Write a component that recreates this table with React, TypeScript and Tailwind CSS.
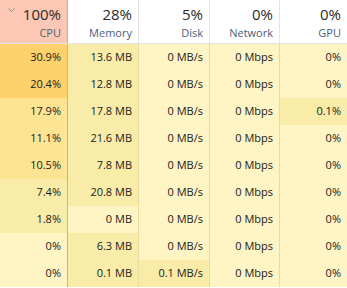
import React from 'react';

// heat levels used by the task manager grid
const heat: Record<number, string> = {
  0: 'bg-[#fff4c4]',
  1: 'bg-[#f9eca8]',
  2: 'bg-[#fde492]',
  3: 'bg-[#fdd26c]',
};

interface Column {
  pct: string;
  label: string;
  width: string;
  border: string;
}

const columns: Column[] = [
  { pct: '100%', label: 'CPU', width: 'w-[68px]', border: 'border-r border-[#f0a27f]' },
  { pct: '28%', label: 'Memory', width: 'w-[71px]', border: 'border-r border-[#e4e4e4]' },
  { pct: '5%', label: 'Disk', width: 'w-[71px]', border: 'border-r border-[#e4e4e4]' },
  { pct: '0%', label: 'Network', width: 'w-[70px]', border: 'border-r border-[#e4e4e4]' },
  { pct: '0%', label: 'GPU', width: 'flex-1', border: '' },
];

const rowBorders = [
  'border-r border-[#f3a65e]',
  'border-r border-[#ecdc9c]',
  'border-r border-[#ecdc9c]',
  'border-r border-[#ecdc9c]',
  '',
];

// [text, heat level] per cell
const rows: [string, number][][] = [
  [['30.9%', 3], ['13.6 MB', 1], ['0 MB/s', 0], ['0 Mbps', 0], ['0%', 0]],
  [['20.4%', 3], ['12.8 MB', 1], ['0 MB/s', 0], ['0 Mbps', 0], ['0%', 0]],
  [['17.9%', 2], ['17.8 MB', 1], ['0 MB/s', 0], ['0 Mbps', 0], ['0.1%', 1]],
  [['11.1%', 2], ['21.6 MB', 1], ['0 MB/s', 0], ['0 Mbps', 0], ['0%', 0]],
  [['10.5%', 2], ['7.8 MB', 1], ['0 MB/s', 0], ['0 Mbps', 0], ['0%', 0]],
  [['7.4%', 1], ['20.8 MB', 1], ['0 MB/s', 0], ['0 Mbps', 0], ['0%', 0]],
  [['1.8%', 1], ['0 MB', 0], ['0 MB/s', 0], ['0 Mbps', 0], ['0%', 0]],
  [['0%', 0], ['6.3 MB', 1], ['0 MB/s', 0], ['0 Mbps', 0], ['0%', 0]],
  [['0%', 0], ['0.1 MB', 1], ['0.1 MB/s', 1], ['0 Mbps', 0], ['0%', 0]],
];

export default function App() {
  return (
    <div
      className="w-[347px] h-[288px] overflow-hidden bg-white text-[#1a1a1a]"
      style={{ fontFamily: '"Segoe UI", "Open Sans", "Noto Sans", sans-serif' }}
    >
      {/* header */}
      <div className="flex h-[44px] border-b border-[#e2e2e2]">
        {columns.map((c, i) => (
          <div
            key={c.label}
            className={`${c.width} ${c.border} relative flex flex-col items-end pr-[6px] pt-[3px] ${
              i === 0 ? 'bg-[#fcc8b5]' : 'bg-white'
            }`}
          >
            {i === 0 && (
              <svg className="absolute left-[8px] top-[8px]" width="7" height="4" viewBox="0 0 7 4">
                <polyline points="0.5,0.5 3.5,3.5 6.5,0.5" fill="none" stroke="#8c8c8c" strokeWidth="1" />
              </svg>
            )}
            <span className="text-[15px] leading-[22px] text-[#2a2a2a]">{c.pct}</span>
            <span className="text-[11px] leading-[16px] text-[#4c607a]">{c.label}</span>
          </div>
        ))}
      </div>

      {/* rows */}
      {rows.map((r, ri) => (
        <div key={ri} className="flex h-[27px]">
          {r.map(([text, lvl], ci) => (
            <div
              key={ci}
              className={`${columns[ci].width} ${rowBorders[ci]} ${heat[lvl]} flex items-center justify-end pr-[6px] text-[11px]`}
            >
              {text}
            </div>
          ))}
        </div>
      ))}
    </div>
  );
}
